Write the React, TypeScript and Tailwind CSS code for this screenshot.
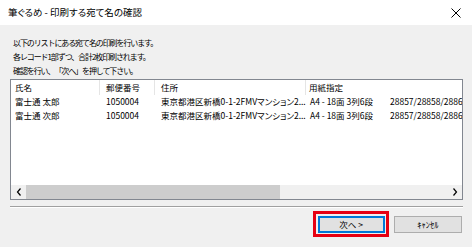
import React from "react";

const font = { fontFamily: '"Noto Sans CJK JP", "Noto Sans", sans-serif' };

function Row({ cells }: { cells: string[] }) {
  return (
    <div className="flex h-[13.5px] items-center whitespace-nowrap">
      <div className="w-[89px] shrink-0 pl-[4px]">{cells[0]}</div>
      <div className="w-[55px] shrink-0 pl-[6px]">{cells[1]}</div>
      <div className="w-[151px] shrink-0 pl-[6px] overflow-hidden">{cells[2]}</div>
      <div className="w-[84px] shrink-0 pl-[4px]">{cells[3]}</div>
      <div className="shrink-0 pl-[0px]">{cells[4]}</div>
    </div>
  );
}

export default function App() {
  return (
    <div
      className="w-[472px] h-[247px] flex flex-col bg-[#f0f0f0] text-black overflow-hidden [font-feature-settings:'palt']"
      style={font}
    >
      <div className="h-[25px] shrink-0 bg-white flex items-center justify-between pl-[8px] pr-[11px]">
        <span className="text-[9.5px] text-black">筆ぐるめ - 印刷する宛て名の確認</span>
        <svg width="10" height="10" viewBox="0 0 10 10">
          <path d="M0.5 0.5 L9.5 9.5 M9.5 0.5 L0.5 9.5" stroke="#000" strokeWidth="1" />
        </svg>
      </div>
      <div className="flex-1 flex flex-col pl-[10px] pr-[9px] pt-[11px]">
        <div className="pl-[3px] text-[8px] leading-[14px] tracking-[-1.1px] [font-feature-settings:normal] [text-spacing-trim:space-all]">
          <div>以下のリストにある宛て名の印刷を行います。</div>
          <div>各レコード1部ずつ、合計2枚印刷されます。</div>
          <div>確認を行い、「次へ」を押して下さい。</div>
        </div>
        <div className="mt-[1px] h-[121px] border border-[#828790] bg-white flex flex-col text-[8.5px] overflow-hidden">
          <div className="flex-1 overflow-hidden">
            <div className="flex h-[15px] items-center whitespace-nowrap">
              <div className="w-[89px] shrink-0 pl-[4px] border-r border-[#e5e5e5] h-full flex items-center">氏名</div>
              <div className="w-[55px] shrink-0 pl-[6px] border-r border-[#e5e5e5] h-full flex items-center">郵便番号</div>
              <div className="w-[151px] shrink-0 pl-[6px] border-r border-[#e5e5e5] h-full flex items-center">住所</div>
              <div className="w-[84px] shrink-0 pl-[3px] h-full flex items-center">用紙指定</div>
            </div>
            <Row cells={["富士通 太郎", "1050004", "東京都港区新橋0-1-2FMVマンション2...", "A4 - 18面  3列6段", "28857/28858/28860"]} />
            <Row cells={["富士通 次郎", "1050004", "東京都港区新橋0-1-2FMVマンション2...", "A4 - 18面  3列6段", "28857/28858/28860"]} />
          </div>
          <div className="h-[14px] shrink-0 flex bg-[#f0f0f0]">
            <div className="w-[15px] flex items-center justify-center">
              <svg width="6" height="8" viewBox="0 0 6 8">
                <path d="M4.5 0.5 L1.5 4 L4.5 7.5" stroke="#000" strokeWidth="1.2" fill="none" />
              </svg>
            </div>
            <div className="w-[254px] bg-[#cdcdcd]" />
            <div className="flex-1" />
            <div className="w-[15px] flex items-center justify-center">
              <svg width="6" height="8" viewBox="0 0 6 8">
                <path d="M1.5 0.5 L4.5 4 L1.5 7.5" stroke="#000" strokeWidth="1.2" fill="none" />
              </svg>
            </div>
          </div>
        </div>
        <div className="mt-[6px] h-[2px] border-t border-[#a0a0a0] border-b border-b-white" />
        <div className="mt-[3px] flex items-center justify-end gap-[5px] pr-[1px]">
          <div className="w-[76px] h-[26px] border-[3px] border-[#e60012] flex items-center justify-center">
            <div className="w-[67px] h-[17px] bg-[#e1e1e1] border-2 border-[#0078d7] flex items-center justify-center text-[8.5px]">
              次へ &gt;
            </div>
          </div>
          <div className="w-[68px] h-[17px] bg-[#e1e1e1] border border-[#adadad] flex items-center justify-center text-[8.5px]">
            ｷｬﾝｾﾙ
          </div>
        </div>
      </div>
    </div>
  );
}
